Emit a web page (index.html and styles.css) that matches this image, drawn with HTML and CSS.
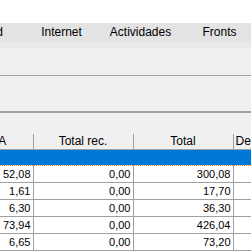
FILE: index.html
```html
<!DOCTYPE html>
<html lang="es">
<head>
    <meta charset="UTF-8">
    <title>Facturas</title>
    <link rel="stylesheet" href="styles.css">
</head>
<body>
<div class="topWhite"></div>
<div class="tabBar">
    <span class="tab">Calidad</span>
    <span class="tab">Internet</span>
    <span class="tab">Actividades</span>
    <span class="tab">Fronts</span>
</div>
<div class="tabStrip"></div>
<div class="panel panelTop"></div>
<div class="panel panelMid"></div>
<div class="panel panelGap"></div>
<div class="gridWrap">
    <table class="grid">
        <thead>
        <tr>
            <th>Total IVA</th>
            <th>Total rec.</th>
            <th>Total</th>
            <th class="left">Descuento</th>
        </tr>
        </thead>
        <tbody>
        <tr class="selected">
            <td></td><td></td><td></td><td></td>
        </tr>
        <tr><td>52,08</td><td>0,00</td><td>300,08</td><td></td></tr>
        <tr><td>1,61</td><td>0,00</td><td>17,70</td><td></td></tr>
        <tr><td>6,30</td><td>0,00</td><td>36,30</td><td></td></tr>
        <tr><td>73,94</td><td>0,00</td><td>426,04</td><td></td></tr>
        <tr><td>6,65</td><td>0,00</td><td>73,20</td><td></td></tr>
        </tbody>
    </table>
</div>
</body>
</html>
```

FILE: styles.css
```css
* {
    margin: 0;
    padding: 0;
    box-sizing: border-box;
}

body {
    width: 251px;
    height: 251px;
    overflow: hidden;
    background: #f0f0f0;
    font: 11px "Liberation Sans", Arial, sans-serif;
    color: #000;
}

.topWhite {
    height: 23px;
    background: #fff;
}

.tabBar {
    display: flex;
    height: 19px;
    margin-left: -57px;
    background: #e3e3e3;
    white-space: nowrap;
}

.tab {
    flex: 0 0 79px;
    text-align: center;
    line-height: 19px;
    font-size: 12px;
}

.tabStrip {
    height: 6px;
    background: #e9e9e9;
}

.panel {
    background: #f0f0f0;
}

.panelTop {
    height: 28px;
    border-bottom: 1px solid #a0a0a0;
}

.panelMid {
    height: 37px;
    border-bottom: 2px solid #a0a0a0;
}

.panelGap {
    height: 21px;
}

.gridWrap {
    margin-left: -67px;
    overflow: hidden;
}

.grid {
    border-collapse: collapse;
    table-layout: fixed;
    width: 400px;
}

.grid th {
    width: 100px;
    height: 15px;
    font-weight: normal;
    font-size: 12px;
    text-align: center;
    background: #f0f0f0;
    border-right: 1px solid #a0a0a0;
    border-bottom: 1px solid #a0a0a0;
    white-space: nowrap;
    overflow: hidden;
    line-height: 14px;
}

.grid th.left {
    text-align: left;
    padding-left: 2px;
}

.grid td {
    height: 17px;
    text-align: right;
    padding-right: 2px;
    background: #fff;
    border-right: 1px solid #a0a0a0;
    border-bottom: 1px solid #a0a0a0;
    line-height: 16px;
}

.grid tr.selected td {
    height: 16px;
    background: #0078d7;
    border-top: 1px dotted #ff8728;
    border-bottom: 1px dotted #ff8728;
    border-right: 0;
}
```
